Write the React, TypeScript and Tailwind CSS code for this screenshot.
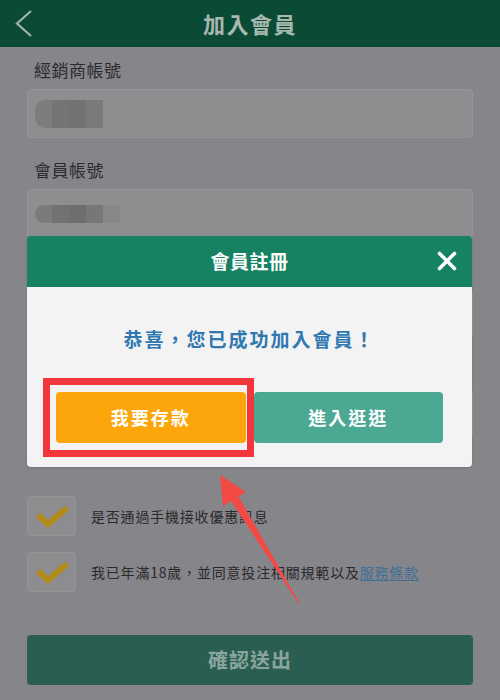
import { useState } from "react";

const font = { fontFamily: '"Noto Sans CJK TC", "Noto Sans", sans-serif' };

function Field({ label, blob, blobH = 28 }: { label: string; blob?: string[]; blobH?: number }) {
  return (
    <div>
      <div className="mb-[7px] pl-[7px] text-[17px] leading-[24px] text-[#2b2b2d] tracking-[0.5px]">
        {label}
      </div>
      <div className="h-[49px] rounded-[4px] border border-[#959597] bg-[#8e8e90] flex items-center pl-[7px]">
        {blob && (
          <div className="flex rounded-l-[10px] overflow-hidden blur-[0.6px]" style={{ height: blobH }}>
            {blob.map((c, i) => (
              <div key={i} className="w-[17px] h-full" style={{ backgroundColor: c }} />
            ))}
          </div>
        )}
      </div>
    </div>
  );
}

function CheckRow({ children }: { children: React.ReactNode }) {
  return (
    <div className="flex items-center gap-[15px]">
      <div className="w-[49px] h-[40px] rounded-[4px] border border-[#959597] bg-[#8d8d8f] flex items-center justify-center">
        <svg width="36" height="26" viewBox="0 0 36 26">
          <polyline
            points="4,12 14,21 33,5"
            fill="none"
            stroke="#b28b1b"
            strokeWidth="6"
            strokeLinejoin="miter"
          />
        </svg>
      </div>
      <div className="text-[14px] tracking-[0.8px] text-[#2a2a2c]">{children}</div>
    </div>
  );
}

export default function App() {
  const [open, setOpen] = useState(true);

  return (
    <div className="relative w-[500px] h-[700px] overflow-hidden bg-[#86858a]" style={font}>
      {/* Header */}
      <div className="h-[47px] bg-[#0b4b36] grid grid-cols-[60px_1fr_60px] items-center">
        <svg width="40" height="30" viewBox="0 0 40 30" className="ml-[8px]">
          <polyline points="23,2 9,14.5 23,27" fill="none" stroke="#a3b4ac" strokeWidth="2.2" />
        </svg>
        <div className="text-center text-[22px] font-bold tracking-[1.5px] text-[#a7b8b0]">加入會員</div>
        <div />
      </div>

      {/* Form */}
      <div className="px-[27px] pt-[11px]">
        <div className="flex flex-col gap-[20px]">
          <Field label="經銷商帳號" blob={["#7d7d7f", "#757577", "#727274", "#7a7a7c"]} />
          <Field label="會員帳號" blobH={18} blob={["#7b7b7d", "#727274", "#6e6e70", "#777779", "#88888a"]} />
          <Field label="會員密碼" />
          <Field label="確認密碼" />
        </div>

        <div className="mt-[58px] flex flex-col gap-[16px]">
          <CheckRow>是否通過手機接收優惠訊息</CheckRow>
          <CheckRow>
            我已年滿18歲，並同意投注相關規範以及
            <span className="text-[#3f6f97] underline underline-offset-2">服務條款</span>
          </CheckRow>
        </div>

        <button className="mt-[43px] w-full h-[50px] rounded-[4px] bg-[#2a5e52] text-[20px] font-bold tracking-[1px] text-[#8aa59b]">
          確認送出
        </button>
      </div>

      {/* Modal */}
      {open && (
        <div className="absolute left-[27px] top-[236px] w-[445px] rounded-[4px] overflow-hidden shadow-sm">
          <div className="relative h-[51px] bg-[#168262] flex items-center justify-center">
            <span className="text-[19px] font-bold text-white tracking-[0.5px]">會員註冊</span>
            <button
              onClick={() => setOpen(false)}
              className="absolute right-[14px] top-[14px] w-[22px] h-[22px] flex items-center justify-center"
            >
              <svg width="20" height="20" viewBox="0 0 20 20">
                <path d="M2.5 2.5 L17.5 17.5 M17.5 2.5 L2.5 17.5" stroke="#ffffff" strokeWidth="3.6" strokeLinecap="round" />
              </svg>
            </button>
          </div>
          <div className="relative bg-[#f3f3f3] h-[180px] pt-[38px] px-[29px]">
            <div className="text-center text-[19px] leading-[28px] font-bold tracking-[2px] text-[#2f78b1]">
              恭喜，您已成功加入會員！
            </div>
            <div className="mt-[39px] grid grid-cols-2 gap-[8px]">
              <button className="h-[51px] rounded-[4px] bg-[#fda60b] text-white text-[18px] font-bold tracking-[2px]">
                我要存款
              </button>
              <button className="h-[51px] rounded-[4px] bg-[#4ba893] text-white text-[18px] font-bold tracking-[2px]">
                進入逛逛
              </button>
            </div>
            {/* highlight box */}
            <div className="absolute left-[16px] top-[91px] w-[211px] h-[79px] border-[7px] border-[#f2363b]" />
          </div>
        </div>
      )}

      {/* Pointer arrow */}
      <svg className="absolute inset-0 pointer-events-none" width="500" height="700" viewBox="0 0 500 700">
        <polygon
          points="220,475 246,492 238.5,496.5 299.5,603 298.5,603.4 231,501 223,506"
          fill="#f24a45"
        />
      </svg>
    </div>
  );
}
